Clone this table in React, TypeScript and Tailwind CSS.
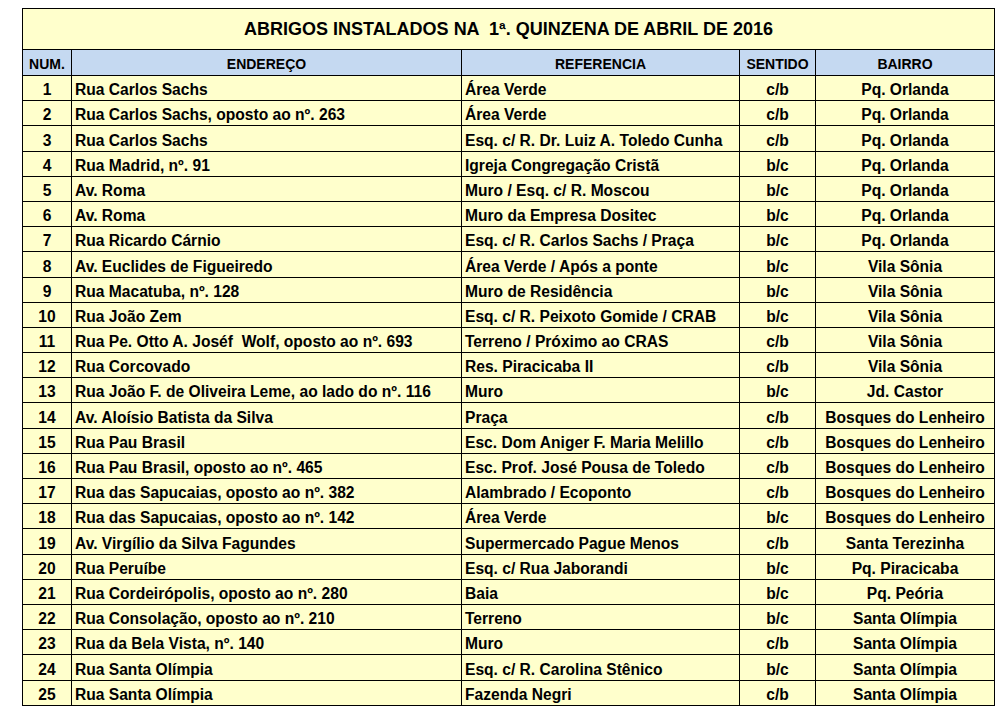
import React from "react";

type Row = [number, string, string, string, string];

const rows: Row[] = [
  [1, "Rua Carlos Sachs", "Área Verde", "c/b", "Pq. Orlanda"],
  [2, "Rua Carlos Sachs, oposto ao nº. 263", "Área Verde", "c/b", "Pq. Orlanda"],
  [3, "Rua Carlos Sachs", "Esq. c/ R. Dr. Luiz A. Toledo Cunha", "c/b", "Pq. Orlanda"],
  [4, "Rua Madrid, nº. 91", "Igreja Congregação Cristã", "b/c", "Pq. Orlanda"],
  [5, "Av. Roma", "Muro / Esq. c/ R. Moscou", "b/c", "Pq. Orlanda"],
  [6, "Av. Roma", "Muro da Empresa Dositec", "b/c", "Pq. Orlanda"],
  [7, "Rua Ricardo Cárnio", "Esq. c/ R. Carlos Sachs / Praça", "b/c", "Pq. Orlanda"],
  [8, "Av. Euclides de Figueiredo", "Área Verde / Após a ponte", "b/c", "Vila Sônia"],
  [9, "Rua Macatuba, nº. 128", "Muro de Residência", "b/c", "Vila Sônia"],
  [10, "Rua João Zem", "Esq. c/ R. Peixoto Gomide / CRAB", "b/c", "Vila Sônia"],
  [11, "Rua Pe. Otto A. Joséf  Wolf, oposto ao nº. 693", "Terreno / Próximo ao CRAS", "c/b", "Vila Sônia"],
  [12, "Rua Corcovado", "Res. Piracicaba II", "c/b", "Vila Sônia"],
  [13, "Rua João F. de Oliveira Leme, ao lado do nº. 116", "Muro", "b/c", "Jd. Castor"],
  [14, "Av. Aloísio Batista da Silva", "Praça", "c/b", "Bosques do Lenheiro"],
  [15, "Rua Pau Brasil", "Esc. Dom Aniger F. Maria Melillo", "c/b", "Bosques do Lenheiro"],
  [16, "Rua Pau Brasil, oposto ao nº. 465", "Esc. Prof. José Pousa de Toledo", "c/b", "Bosques do Lenheiro"],
  [17, "Rua das Sapucaias, oposto ao nº. 382", "Alambrado / Ecoponto", "c/b", "Bosques do Lenheiro"],
  [18, "Rua das Sapucaias, oposto ao nº. 142", "Área Verde", "b/c", "Bosques do Lenheiro"],
  [19, "Av. Virgílio da Silva Fagundes", "Supermercado Pague Menos", "c/b", "Santa Terezinha"],
  [20, "Rua Peruíbe", "Esq. c/ Rua Jaborandi", "b/c", "Pq. Piracicaba"],
  [21, "Rua Cordeirópolis, oposto ao nº. 280", "Baia", "b/c", "Pq. Peória"],
  [22, "Rua Consolação, oposto ao nº. 210", "Terreno", "b/c", "Santa Olímpia"],
  [23, "Rua da Bela Vista, nº. 140", "Muro", "c/b", "Santa Olímpia"],
  [24, "Rua Santa Olímpia", "Esq. c/ R. Carolina Stênico", "b/c", "Santa Olímpia"],
  [25, "Rua Santa Olímpia", "Fazenda Negri", "c/b", "Santa Olímpia"],
];

const cell = "border border-black align-bottom pb-[2px] leading-[17px] whitespace-pre";
const head = "border border-black align-bottom pb-[3px] text-[14px] leading-[15px] text-center";

export default function App() {
  return (
    <div className="bg-white w-[1002px] h-[715px] pt-[8px] pl-[22px] font-['Liberation_Sans',Arial,sans-serif] font-bold text-black">
      <table className="table-fixed border-collapse w-[972px] bg-[#ffffcc]">
        <colgroup>
          <col className="w-[49px]" />
          <col className="w-[390px]" />
          <col className="w-[278px]" />
          <col className="w-[76px]" />
          <col className="w-[179px]" />
        </colgroup>
        <thead>
          <tr className="h-[41px]">
            <th colSpan={5} className="border border-black text-center align-middle text-[18px] whitespace-pre pt-[1px]">
              {"ABRIGOS INSTALADOS NA  1ª. QUINZENA DE ABRIL DE 2016"}
            </th>
          </tr>
          <tr className="h-[26px] bg-[#c5d9f1]">
            <th className={head}>NUM.</th>
            <th className={head}>ENDEREÇO</th>
            <th className={head}>REFERENCIA</th>
            <th className={head}>SENTIDO</th>
            <th className={head}>BAIRRO</th>
          </tr>
        </thead>
        <tbody className="text-[15.6px]">
          {rows.map(([n, end, ref, sent, bairro]) => (
            <tr key={n} className="h-[25.2px]">
              <td className={`${cell} text-center`}>{n}</td>
              <td className={`${cell} pl-[3px]`}>{end}</td>
              <td className={`${cell} pl-[3px]`}>{ref}</td>
              <td className={`${cell} text-center`}>{sent}</td>
              <td className={`${cell} text-center`}>{bairro}</td>
            </tr>
          ))}
        </tbody>
      </table>
    </div>
  );
}
